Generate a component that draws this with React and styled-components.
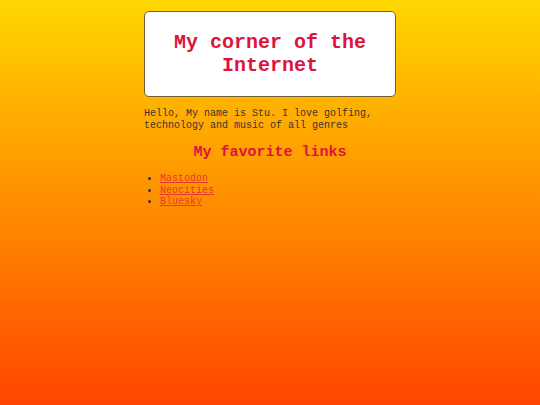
import styled, { createGlobalStyle } from "styled-components";

const Global = createGlobalStyle`
html, body {
    margin: 0;
    padding: 0;
}
body {
    min-height: 100vh;
    background: linear-gradient(to bottom, #ffd700, #ff4500);
    font-family: "Liberation Mono", "Courier New", monospace;
    color: #333;
}
`

const Page = styled.div`
width: 252px;
margin: 0 auto;
padding-top: 11px;
`

const Header = styled.header`
background: #fff;
border: 1px solid #6e5e3a;
border-radius: 5px;
padding: 20px 10px 19px;
text-align: center;
`

const Title = styled.h1`
margin: 0;
font-size: 20px;
line-height: 22.5px;
font-weight: bold;
color: #dc143c;
`

const Intro = styled.p`
margin: 11px 0 0 0;
font-size: 10px;
line-height: 12px;
color: #3a3530;
`

const Sub = styled.h2`
margin: 12px 0 0 0;
font-size: 15px;
line-height: 17px;
text-align: center;
color: #dc143c;
`

const List = styled.ul`
margin: 12px 0 0 0;
padding-left: 16px;
font-size: 10px;
line-height: 11.5px;
`

const Link = styled.a`
color: #e83a2a;
text-decoration: underline;
`

const links = ["Mastodon", "Neocities", "Bluesky"]

const App = () => {
    return <>
        <Global />
        <Page>
            <Header>
                <Title>My corner of the Internet</Title>
            </Header>
            <Intro>Hello, My name is Stu. I love golfing, technology and music of all genres</Intro>
            <Sub>My favorite links</Sub>
            <List>
                {links.map(l => <li key={l}><Link href="#">{l}</Link></li>)}
            </List>
        </Page>
    </>
}

export default App
